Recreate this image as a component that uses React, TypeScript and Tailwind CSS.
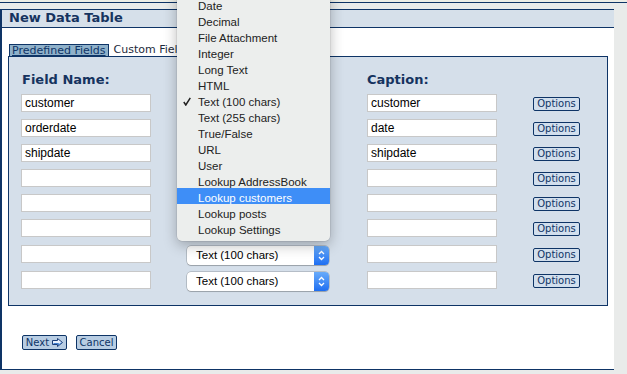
import React from "react";

const navy = "border-[#0e3466]";

const fieldRows = [
  { name: "customer", caption: "customer", h: "h-[25px]" },
  { name: "orderdate", caption: "date", h: "h-[25px]" },
  { name: "shipdate", caption: "shipdate", h: "h-[25px]" },
  { name: "", caption: "", h: "h-[25px]" },
  { name: "", caption: "", h: "h-[25px]" },
  { name: "", caption: "", h: "h-[26px]" },
  { name: "", caption: "", h: "h-[26px]" },
  { name: "", caption: "", h: "h-[25px]" },
];

const menuItems = [
  "Date",
  "Decimal",
  "File Attachment",
  "Integer",
  "Long Text",
  "HTML",
  "Text (100 chars)",
  "Text (255 chars)",
  "True/False",
  "URL",
  "User",
  "Lookup AddressBook",
  "Lookup customers",
  "Lookup posts",
  "Lookup Settings",
];

const TextBox = ({ value }: { value: string }) => (
  <div className="w-[130px] h-[18px] mt-px bg-white border border-[#c8c8c8] pl-[3px] text-[12px] leading-[16px] text-black font-['Liberation_Sans',sans-serif]">
    {value}
  </div>
);

// rows under the open menu are hidden by it
const TypeSelect = ({ hidden }: { hidden: boolean }) => (
  <div
    className={`w-[142px] h-[19px] mt-[2px] bg-white rounded-[4px] shadow-[0_0_0_0.5px_rgba(0,0,0,0.3),0_1px_1px_rgba(0,0,0,0.15)] flex items-center overflow-hidden ${hidden ? "invisible" : ""}`}
  >
    <span className="flex-1 pl-[9px] text-[11.5px] leading-[19px] text-black font-['Liberation_Sans',sans-serif]">
      Text (100 chars)
    </span>
    <span className="w-[15px] h-full bg-linear-to-b from-[#68abfa] to-[#1d6ef1] flex items-center justify-center">
      <svg width="7" height="11" viewBox="0 0 7 11" fill="none" stroke="white" strokeWidth="1.3">
        <path d="M1 4 L3.5 1.5 L6 4" />
        <path d="M1 7 L3.5 9.5 L6 7" />
      </svg>
    </span>
  </div>
);

const OptionsButton = () => (
  <button className="block h-[14px] w-[47px] mt-[4px] bg-[#d2dfed] border border-[#0e3466] rounded-[2px] text-[10px] leading-[12px] text-[#0e3466] font-['DejaVu_Sans',sans-serif]">
    Options
  </button>
);

const NextArrow = () => (
  <svg width="11" height="9" viewBox="0 0 11 9">
    <path d="M0.5 2.5 H5.5 V0.5 L10.5 4.5 L5.5 8.5 V6.5 H0.5 Z" fill="#e8f2ff" stroke="#1a3d78" strokeWidth="1" />
    <path d="M1.5 5.5 H6.5 V7 L9.5 4.5" fill="none" stroke="#3f7fd0" strokeWidth="1" />
  </svg>
);

const App = () => {
  return (
    <div className="w-[627px] h-[374px] bg-[#e9ebea] relative overflow-hidden font-['DejaVu_Sans',sans-serif]">
      {/* top strip */}
      <div className="h-[2px] bg-[#ecede6]"></div>
      <div className="h-px bg-[#0e3466]"></div>
      <div className="h-[6px]"></div>

      {/* Main panel */}
      <div className={`w-[614px] h-[361px] bg-white border-l-2 border-b ${navy} flex flex-col`}>
        <div className={`h-[19px] bg-[#d6e0ea] border-y ${navy} pl-[7px]`}>
          <h1 className="text-[13px] leading-[15px] font-bold text-[#15335f]">New Data Table</h1>
        </div>

        <div className="px-[6px] pt-[16px]">
          {/* Tabs */}
          <div className="flex items-end h-[12px] pl-px gap-[5px]">
            <span className={`h-[12px] px-[2px] bg-[#8fb1ca] border-x border-t ${navy} text-[11px] leading-[12px] text-[#0e3466] underline`}>
              Predefined Fields
            </span>
            <span className="text-[11px] leading-[12px] text-[#1d2a3c]">Custom Fields</span>
          </div>

          {/* Fields box */}
          <div className={`h-[250px] bg-[#d5dfea] border ${navy} pl-[12px] pt-[15px]`}>
            <div className="flex h-[21px] text-[13px] leading-[15px] font-bold text-[#15335f]">
              <span className="w-[346px] pl-px">Field Name:</span>
              <span>Caption:</span>
            </div>
            {fieldRows.map((row, i) => (
              <div key={i} className={`flex items-start ${row.h}`}>
                <TextBox value={row.name} />
                <div className="flex ml-[36px]">
                  <TypeSelect hidden={i < 6} />
                </div>
                <div className="flex ml-[38px]">
                  <TextBox value={row.caption} />
                </div>
                <div className="flex ml-[36px]">
                  <OptionsButton />
                </div>
              </div>
            ))}
          </div>

          {/* Buttons */}
          <div className="flex gap-[9px] mt-[29px] ml-[14px]">
            <button className="h-[15px] w-[45px] bg-[#b8cde3] border border-[#0e3466] rounded-[2px] flex items-center justify-center gap-[3px] text-[10px] leading-[12px] text-[#0e3466]">
              Next
              <NextArrow />
            </button>
            <button className="h-[15px] w-[41px] bg-[#b8cde3] border border-[#0e3466] rounded-[2px] text-[10px] leading-[12px] text-[#0e3466]">
              Cancel
            </button>
          </div>
        </div>
      </div>

      {/* Open select menu */}
      <div className="absolute left-[177px] top-[-9px] w-[153px] py-[5px] bg-[#eceeed] rounded-b-[5px] shadow-[0_4px_14px_rgba(0,0,0,0.28),0_0_0_0.5px_rgba(0,0,0,0.12)] font-['Liberation_Sans',sans-serif]">
        {menuItems.map((item) => {
          const active = item === "Lookup customers";
          const checked = item === "Text (100 chars)";
          return (
            <div
              key={item}
              className={`relative h-[16px] pl-[21px] text-[11.5px] leading-[20px] ${active ? "bg-[#3e8ef7] text-white" : "text-[#222]"}`}
            >
              {checked && (
                <svg className="absolute left-[6px] top-[5px]" width="8" height="9" viewBox="0 0 8 9">
                  <path d="M0.8 5 L2.8 8 L7.3 0.8" fill="none" stroke="#222" strokeWidth="1.5" />
                </svg>
              )}
              {item}
            </div>
          );
        })}
      </div>
    </div>
  );
};

export default App;
